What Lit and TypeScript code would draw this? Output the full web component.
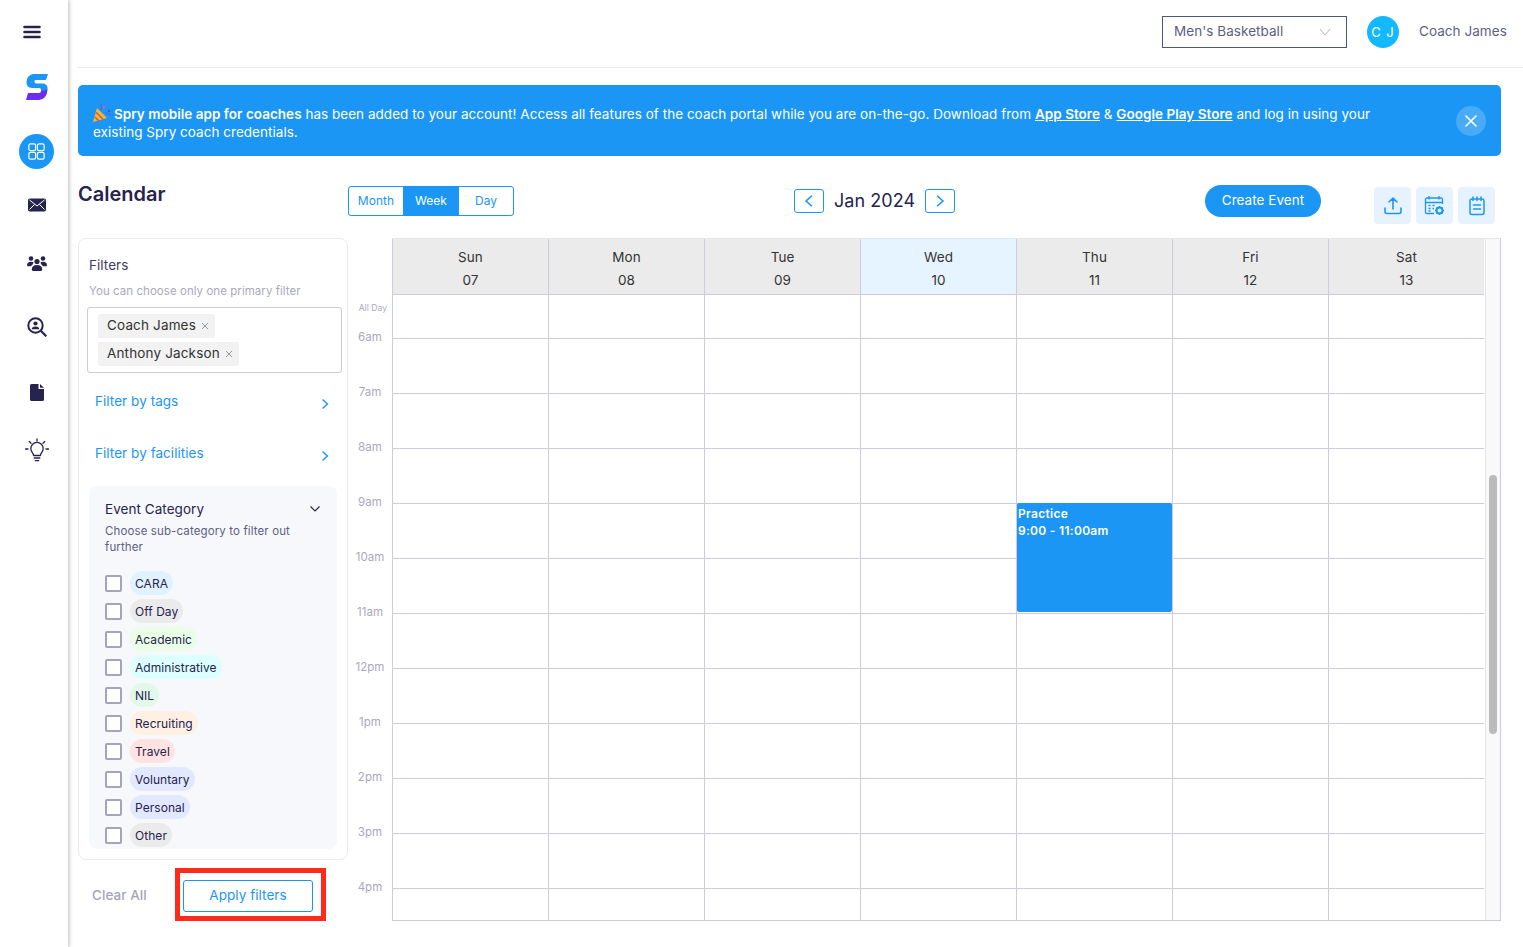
import { LitElement, html, css, svg } from "lit";
import { customElement } from "lit/decorators.js";

const DAYS = [["Sun","07"],["Mon","08"],["Tue","09"],["Wed","10"],["Thu","11"],["Fri","12"],["Sat","13"]];
const HOURS = ["6am","7am","8am","9am","10am","11am","12pm","1pm","2pm","3pm","4pm"];
const CATS: [string,string][] = [["CARA","#e1f2ff"],["Off Day","#ebebeb"],["Academic","#eafde6"],["Administrative","#dcffff"],["NIL","#e2f9e9"],["Recruiting","#fff0e4"],["Travel","#ffe3e3"],["Voluntary","#e2e9ff"],["Personal","#e2e9ff"],["Other","#ebebeb"]];

const chevron = (d: string) => html`<svg class="chev" width="10" height="12" viewBox="0 0 10 12"><path d="${d}" fill="none" stroke="currentColor" stroke-width="1.4"/></svg>`;
const RIGHT = "M2.5 1.5 L7.5 6 L2.5 10.5";
const LEFT = "M7.5 1.5 L2.5 6 L7.5 10.5";
const tagX = html`<svg width="8" height="8" viewBox="0 0 8 8"><path d="M1 1L7 7M7 1L1 7" stroke="#8a8a8a" stroke-width=".9"/></svg>`;

const ICONS = [
  svg`<svg width="18" height="14" viewBox="0 0 18 14"><path d="M1.5 2H16.5M1.5 7H16.5M1.5 12H16.5" stroke="#26234f" stroke-width="2.6" stroke-linecap="round"/></svg>`,
  svg`<svg width="22" height="26" viewBox="0 0 22 26"><path d="M7 0H22L20 6H10Q8 6 8.5 8Q9 9.5 11 9.5H17Q21.5 10 21.5 14V16L15 17.5V15.5Q15 14 13 14H6Q0 13.5 0.5 8Q1 1 7 0Z" fill="#1b96f5"/><path d="M15 17L21.5 15.5Q21 25 13 26H0L2 19H13Q15 19 15 17Z" fill="#6a2cf0"/></svg>`,
  svg`<svg width="17" height="17" viewBox="0 0 20 20" fill="none" stroke="#fff" stroke-width="1.4"><rect x="1" y="1" width="8" height="8" rx="2"/><rect x="11" y="1" width="8" height="8" rx="2"/><rect x="1" y="11" width="8" height="8" rx="2"/><rect x="11" y="11" width="8" height="8" rx="2"/></svg>`,
  svg`<svg width="18" height="14" viewBox="0 0 18 14"><rect width="18" height="13" y=".5" rx="1.8" fill="#26234f"/><path d="M1.5 2L9 8L16.5 2M1.5 11.5L6.5 6.5M16.5 11.5L11.5 6.5" stroke="#fff" stroke-width="1" fill="none"/></svg>`,
  svg`<svg width="20" height="15" viewBox="0 0 20 15" fill="#26234f"><circle cx="4" cy="2.5" r="2.3"/><circle cx="16" cy="2.5" r="2.3"/><circle cx="10" cy="5.5" r="2.6"/><path d="M0 9.5Q0 5.8 4 5.8Q6 5.8 6.6 6.6Q6 9 3.6 10.2H.6Z"/><path d="M20 9.5Q20 5.8 16 5.8Q14 5.8 13.4 6.6Q14 9 16.4 10.2H19.4Z"/><path d="M4.8 13.5Q4.8 9 10 9Q15.2 9 15.2 13.5Q15.2 15 13.6 15H6.4Q4.8 15 4.8 13.5Z"/></svg>`,
  svg`<svg width="20" height="20" viewBox="0 0 20 20"><circle cx="8.5" cy="8.5" r="7.2" fill="none" stroke="#26234f" stroke-width="2"/><path d="M13.8 13.8L19.3 19.3" stroke="#26234f" stroke-width="2.2"/><circle cx="8.5" cy="6.5" r="2.1" fill="#26234f"/><path d="M4.7 12.3Q4.7 9.4 8.5 9.4Q12.3 9.4 12.3 12.3Z" fill="#26234f"/></svg>`,
  svg`<svg width="14" height="17" viewBox="0 0 14 17"><path d="M1.5 0H8.5V5H14V15.5Q14 17 12.5 17H1.5Q0 17 0 15.5V1.5Q0 0 1.5 0Z" fill="#26234f"/><path d="M10 0L14 3.8H10Z" fill="#26234f"/></svg>`,
  svg`<svg width="24" height="24" viewBox="0 0 24 24" fill="none" stroke="#26234f" stroke-width="1.3" stroke-linecap="round" stroke-linejoin="round"><path d="M12 0.8V3M4.3 3.5L6 5.2M19.7 3.5L18 5.2M.5 11H3M21 11H23.5"/><path d="M8.6 17.5C8.6 15 5.8 14 5.8 10.6A6.2 6.2 0 0 1 18.2 10.6C18.2 14 15.4 15 15.4 17.5Z"/><path d="M9.2 20H14.8M10.3 22.7H13.7"/></svg>`,
];

@customElement("app-root")
export class AppRoot extends LitElement {
  static styles = css`
    :host { display: block; height: 947px; width: 1523px; overflow: hidden; background: #fff; font-family: Inter, "Noto Sans", sans-serif; font-size: 13.5px; color: #26234f; letter-spacing: .05px; }
    * { box-sizing: border-box; }
    .app { display: flex; height: 947px; }
    .side { width: 68px; flex: none; display: grid; grid-template-rows: 44px 66px 62px 46px 70px 58px 72px 44px; align-content: start; justify-items: center; align-items: center; padding: 10px 0 0 19px; grid-template-columns: 35px; box-shadow: 1px 0 4px rgba(0,0,0,.28); position: relative; }
    .side > div { display: flex; align-items: center; justify-content: center; }
    .side .burger { margin-left: -9px; }
    .side .active { width: 35px; height: 35px; border-radius: 50%; background: #1b96f5; }
    .main { flex: 1; min-width: 0; padding-left: 10px; }
    .head { height: 68px; border-bottom: 1px solid #ebebeb; display: flex; align-items: flex-start; padding-top: 16px; padding-right: 15px; justify-content: flex-end; color: #5b5f85; }
    .select { width: 185px; height: 32px; border: 1px solid #4d5583; display: flex; align-items: center; justify-content: space-between; padding: 0 15px 2px 11px; }
    .select .chev { color: #b8b8c4; width: 12px; margin-top: 2px; }
    .avatar { width: 32px; height: 32px; border-radius: 50%; background: #14b8ff; color: #fff; margin-left: 20px; display: flex; align-items: center; justify-content: center; font-size: 13px; letter-spacing: 1px; }
    .who { margin-left: 20px; line-height: 30px; width: 89px; white-space: nowrap; }
    .alert { margin: 17px 22px 0 0; height: 71px; background: #1b96f5; border-radius: 5px; color: #fff; padding: 19px 15px; line-height: 18px; display: flex; justify-content: space-between; align-items: flex-start; letter-spacing: .03px; }
    .alert a { color: #fff; font-weight: 600; text-decoration: underline; }
    .alert b { font-weight: 600; }
    .alert .pop { vertical-align: -3px; margin-right: 3px; }
    .close { width: 30px; height: 30px; border-radius: 50%; background: rgba(255,255,255,.2); flex: none; display: flex; align-items: center; justify-content: center; margin-top: 2px; }
    .tools { display: flex; align-items: center; height: 62px; margin-top: 14px; }
    h1 { width: 270px; margin: 0 0 14px; font-size: 20px; font-weight: 600; color: #26234f; letter-spacing: 0; }
    .seg { display: flex; width: 166px; height: 30px; border: 1px solid #1b96f5; border-radius: 3px; font-size: 12px; color: #1b96f5; }
    .seg span { width: 54px; display: flex; align-items: center; justify-content: center; padding-bottom: 1px; }
    .seg .on { width: 56px; background: #1b96f5; color: #fff; }
    .nav { margin-left: 280px; width: 161px; display: flex; align-items: center; justify-content: space-between; font-size: 18px; }
    .nav span { padding-bottom: 2px; }
    .nav button { width: 30px; height: 24px; background: #fff; border: 1px solid #1b96f5; border-radius: 3px; color: #1b96f5; padding: 0; display: flex; align-items: center; justify-content: center; }
    .nav .chev { width: 12px; height: 14px; }
    .create { margin-left: 250px; width: 116px; height: 32px; border-radius: 16px; background: #1b96f5; color: #fff; display: flex; align-items: center; justify-content: center; padding-bottom: 2px; }
    .icons { margin: 9px 0 0 53px; display: flex; gap: 5px; }
    .icons div { width: 37px; height: 37px; border-radius: 4px; background: #e6f3fe; display: flex; align-items: center; justify-content: center; }
    .body { display: flex; margin-top: 6px; }
    .left { width: 270px; flex: none; }
    .panel { height: 622px; border: 1px solid #ebebeb; border-radius: 8px; padding: 17px 10px 0 10px; }
    .panel h2 { margin: 0; font-size: 13.5px; font-weight: 400; line-height: 18px; color: #3f3d66; }
    .hint { font-size: 11.5px; line-height: 16px; color: #aaa8c0; margin-top: 9px; }
    .multi { margin: 8px -5px 0 -2px; height: 66px; border: 1px solid #ccc; border-radius: 3px; padding: 6px 10px; display: flex; flex-direction: column; align-items: flex-start; gap: 4px; }
    .tag { height: 24px; background: #f2f2f2; border-radius: 2px; padding: 0 6px 2px 9px; display: flex; align-items: center; gap: 5px; color: #333; letter-spacing: .15px; }
    .tag svg { margin-top: 2px; }
    .link { display: flex; justify-content: space-between; align-items: center; color: #1b96f5; height: 20px; padding: 0 7px 0 6px; }
    .link .chev { margin-top: 5px; }
    .l1 { margin-top: 18px; }
    .l2 { margin-top: 32px; }
    .cat { margin-top: 23px; height: 363px; overflow: hidden; background: #f7f8fb; border-radius: 8px; padding: 14px 16px 0; }
    .cat-t { display: flex; justify-content: space-between; align-items: center; line-height: 18px; color: #26234f; }
    .cat-s { font-size: 11.5px; line-height: 16px; color: #5b5f85; margin-top: 5px; width: 200px; letter-spacing: .12px; }
    .list { margin-top: 16px; display: flex; flex-direction: column; gap: 4px; }
    .row { display: flex; align-items: center; gap: 8px; height: 24px; }
    .box { width: 17px; height: 17px; border: 2px solid #a6a3bd; border-radius: 2px; background: #fff; }
    .pill { height: 24px; border-radius: 12px; padding: 0 5px; display: flex; align-items: center; font-size: 12px; color: #26234f; }
    .foot { display: flex; align-items: flex-start; margin-top: 8px; }
    .clear { margin: 18px 0 0 14px; width: 83px; font-weight: 500; color: #a6a3bd; line-height: 18px; }
    .mark { border: 5px solid #ff2a1a; padding: 7px 8px 4px 3px; }
    .apply { width: 130px; height: 32px; border: 1px solid #1b96f5; border-radius: 3px; color: #1b96f5; display: flex; align-items: center; justify-content: center; padding-bottom: 2px; }
    .cal { display: flex; height: 683px; }
    .gutter { width: 44px; flex: none; padding-top: 62px; font-size: 11.5px; color: #aaa8c0; text-align: center; }
    .gutter div { height: 55px; line-height: 55px; }
    .gutter .ad { height: 16px; line-height: 16px; margin-bottom: -6px; font-size: 8.5px; text-align: right; padding-right: 5px; }
    .sheet { display: flex; width: 1109px; height: 683px; border-bottom: 1px solid #ccc; border-right: 1px solid #cfcbdc; border-top: 1px solid #e6e6e6; overflow: hidden; }
    .grid { position: relative; flex: none; width: 1092px; display: grid; grid-template-columns: repeat(7, 156px); grid-template-rows: 55px 44px; grid-auto-rows: 55px; align-content: start; }
    .dh { background: #ebebeb; border-left: 1px solid #cfcbdc; text-align: center; padding-top: 7px; line-height: 23px; color: #333; }
    .dh.today { background: #e6f4ff; }
    .cell { border-left: 1px solid #cfcbdc; border-top: 1px solid #cfcbdc; }
    .ev { position: absolute; left: 625px; top: 264px; width: 155px; height: 109px; background: #1b96f5; color: #fff; border-radius: 2px; font-size: 12px; font-weight: 600; line-height: 17px; padding: 2px 1px; letter-spacing: .3px; }
    .track { flex: none; width: 16px; margin-left: 1px; background: #f9f9f9; border-left: 1px solid #e4e4e4; border-right: 1px solid #e0e0e0; padding: 236px 3px 0; }
    .thumb { height: 259px; background: #bbb; border-radius: 4px; }
  `;

  render() {
    return html`<div class="app">
      <nav class="side">
        <div class="burger">${ICONS[0]}</div>
        <div>${ICONS[1]}</div>
        <div class="active">${ICONS[2]}</div>
        <div>${ICONS[3]}</div>
        <div>${ICONS[4]}</div>
        <div>${ICONS[5]}</div>
        <div>${ICONS[6]}</div>
        <div>${ICONS[7]}</div>
      </nav>
      <div class="main">
        <header class="head">
          <div class="select"><span>Men's Basketball</span>
            <svg class="chev" width="12" height="8" viewBox="0 0 12 8"><path d="M1 1L6 7L11 1" fill="none" stroke="currentColor"/></svg></div>
          <div class="avatar">C J</div>
          <div class="who">Coach James</div>
        </header>
        <div class="alert">
          <div>
            <svg class="pop" width="18" height="18" viewBox="0 0 18 18"><path d="M0 18L4 4L14 14Z" fill="#f7b733"/><path d="M2 13L6 17M3.2 8.5L10 15" stroke="#d9534f" stroke-width="1.5"/><circle cx="11" cy="3" r="1.3" fill="#e25b9b"/><circle cx="16" cy="7" r="1.2" fill="#4a4ae0"/><path d="M8 6Q9 3 8 0M12 9Q15 9 18 11" stroke="#7a52c7" fill="none"/></svg><b>Spry mobile app for coaches</b> has been added to your account! Access all features of the coach portal while you are on-the-go. Download from <a>App Store</a> &amp; <a>Google Play Store</a> and log in using your<br>existing Spry coach credentials.
          </div>
          <div class="close"><svg width="14" height="14" viewBox="0 0 14 14"><path d="M1.5 1.5L12.5 12.5M12.5 1.5L1.5 12.5" stroke="#fff" stroke-width="1.7"/></svg></div>
        </div>
        <div class="tools">
          <h1>Calendar</h1>
          <div class="seg"><span>Month</span><span class="on">Week</span><span>Day</span></div>
          <div class="nav"><button>${chevron(LEFT)}</button><span>Jan 2024</span><button>${chevron(RIGHT)}</button></div>
          <div class="create">Create Event</div>
          <div class="icons">
            <div><svg width="20" height="20" viewBox="0 0 20 20" fill="none" stroke="#1b96f5" stroke-width="1.6" stroke-linecap="round" stroke-linejoin="round"><path d="M10 13V2.5M6 6L10 2.2L14 6"/><path d="M2 12V15.5Q2 17.5 4 17.5H16Q18 17.5 18 15.5V12"/></svg></div>
            <div><svg width="21" height="21" viewBox="0 0 21 21" fill="none" stroke="#1b96f5" stroke-width="1.3"><path d="M10 18.5H3Q1.5 18.5 1.5 17V4.5Q1.5 3 3 3H17Q18.5 3 18.5 4.5V9"/><path d="M1.5 7.5H18.5M5 1V4.5M15 1V4.5"/><path d="M4.5 10.5H6.5M8.5 10.5H10.5M4.5 13.5H6.5M8.5 13.5H10M4.5 16H6.5"/><circle cx="15.5" cy="15.5" r="3" stroke-width="2"/><path d="M15.5 11V12.2M15.5 18.8V20M11 15.5H12.2M18.8 15.5H20M12.4 12.4L13.2 13.2M17.8 17.8L18.6 18.6M18.6 12.4L17.8 13.2M13.2 17.8L12.4 18.6" stroke-width="1.4"/></svg></div>
            <div><svg width="18" height="20" viewBox="0 0 18 20" fill="none" stroke="#1b96f5" stroke-width="1.5" stroke-linecap="round"><rect x="2" y="3" width="14" height="15.5" rx="2"/><path d="M5 1V4.5M9 1V4.5M13 1V4.5M5.5 9H12.5M5.5 13H12.5"/></svg></div>
          </div>
        </div>
        <div class="body">
          <div class="left">
            <div class="panel">
              <h2>Filters</h2>
              <div class="hint">You can choose only one primary filter</div>
              <div class="multi">
                <div class="tag">Coach James ${tagX}</div>
                <div class="tag">Anthony Jackson ${tagX}</div>
              </div>
              <div class="link l1"><span>Filter by tags</span>${chevron(RIGHT)}</div>
              <div class="link l2"><span>Filter by facilities</span>${chevron(RIGHT)}</div>
              <div class="cat">
                <div class="cat-t"><span>Event Category</span><svg width="12" height="8" viewBox="0 0 12 8"><path d="M1.5 1.5L6 6L10.5 1.5" fill="none" stroke="#26234f" stroke-width="1.2"/></svg></div>
                <div class="cat-s">Choose sub-category to filter out further</div>
                <div class="list">
                  ${CATS.map(([n, c]) => html`<div class="row"><span class="box"></span><span class="pill" style="background:${c}">${n}</span></div>`)}
                </div>
              </div>
            </div>
            <div class="foot">
              <div class="clear">Clear All</div>
              <div class="mark"><div class="apply">Apply filters</div></div>
            </div>
          </div>
          <div class="cal">
            <div class="gutter">
              <div class="ad">All Day</div>
              ${HOURS.map((h) => html`<div>${h}</div>`)}
            </div>
            <div class="sheet">
              <div class="grid">
                ${DAYS.map(([d, n], i) => html`<div class="dh ${i === 3 ? "today" : ""}">${d}<br>${n}</div>`)}
                ${DAYS.map(() => html`<div class="cell"></div>`)}
                ${HOURS.map(() => DAYS.map(() => html`<div class="cell"></div>`))}
                <div class="ev">Practice<br>9:00 - 11:00am</div>
              </div>
              <div class="track"><div class="thumb"></div></div>
            </div>
          </div>
        </div>
      </div>
    </div>`;
  }
}
